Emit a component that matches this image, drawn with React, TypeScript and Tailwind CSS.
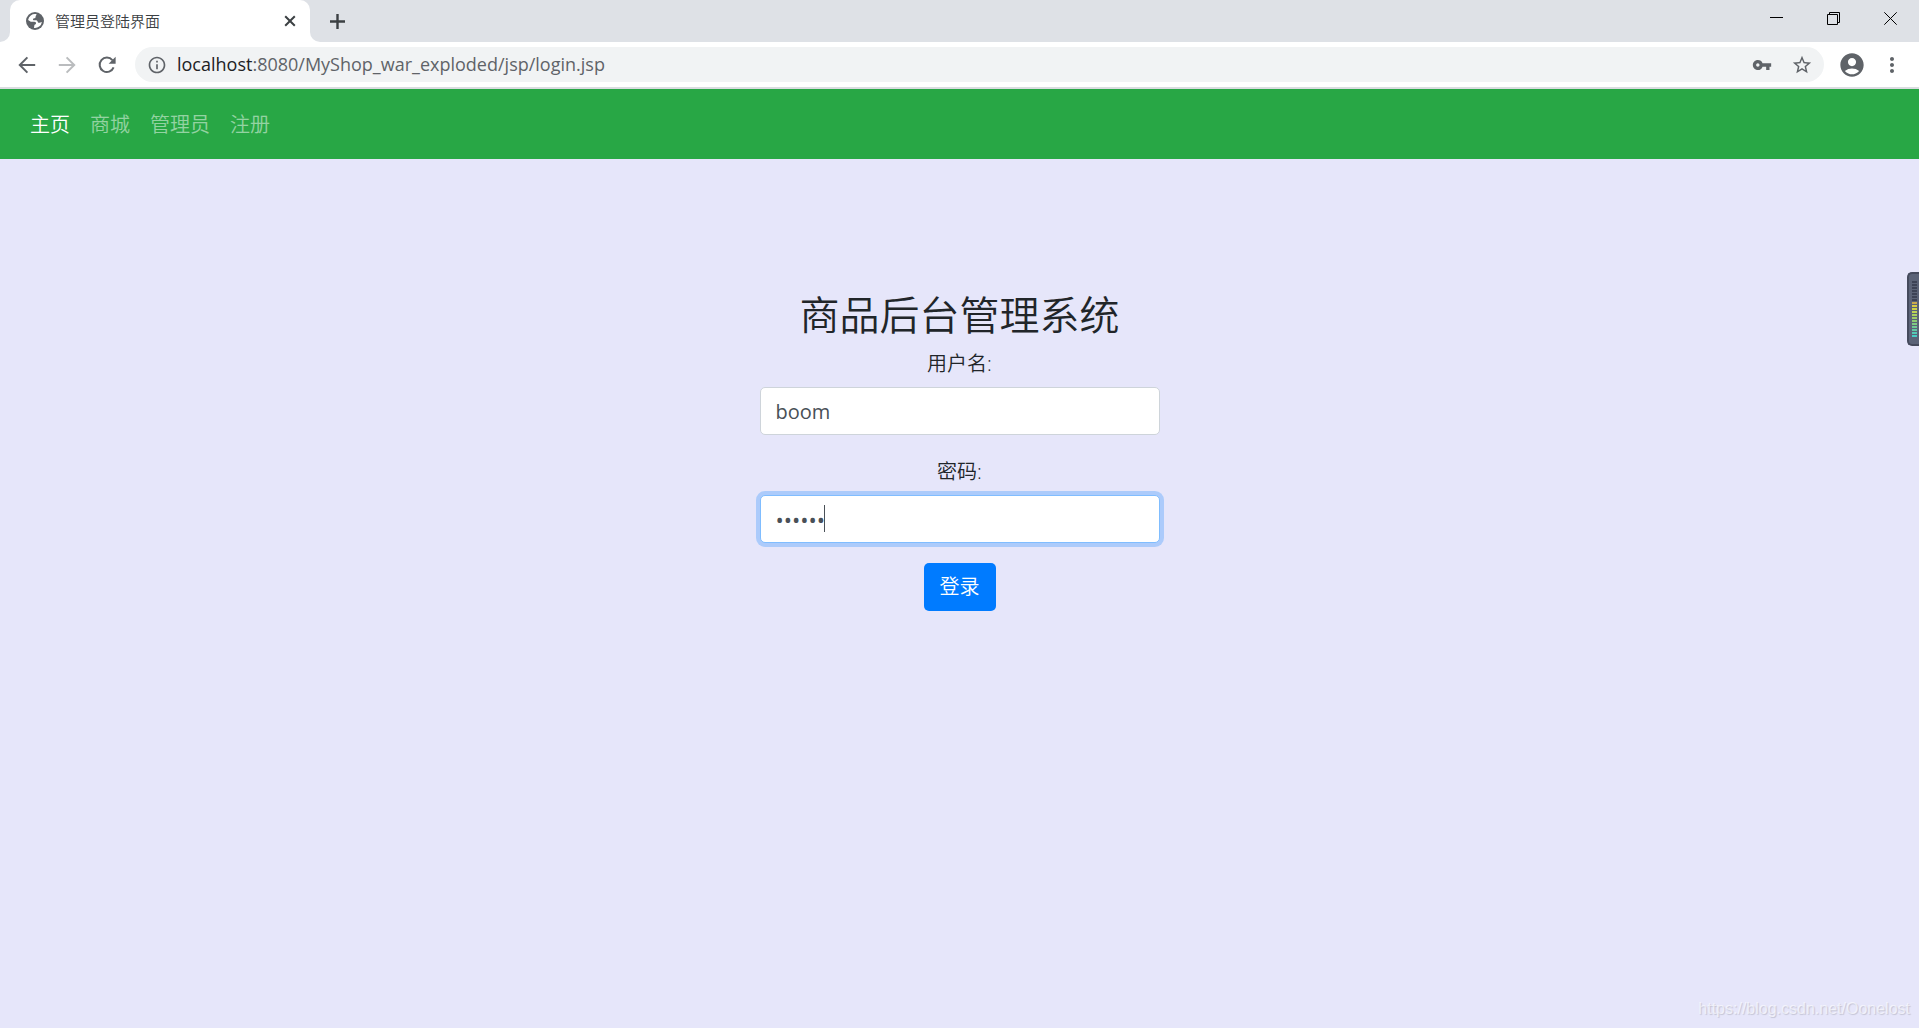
import { useState } from 'react';
import type { ReactNode } from 'react';
import { MdAccountCircle, MdMoreVert, MdOutlineInfo, MdStarBorder, MdVpnKey } from 'react-icons/md';

const navItems = [
  { label: '主页', active: true },
  { label: '商城', active: false },
  { label: '管理员', active: false },
  { label: '注册', active: false },
];

// Lit bars of the level meter, top to bottom
const meterBars = [
  '#3d4356', '#3d4356', '#3d4356', '#3d4356', '#3d4356', '#3d4356', '#3d4356',
  '#c9a94e', '#d8cb45', '#cdd24a', '#bdd354', '#a9d05f', '#9ccd68', '#8ccb74', '#7fcb83',
  '#6fc994', '#62c8a4', '#55c9b4', '#48cbc3',
];

function GlobeIcon() {
  return (
    <svg width="18" height="18" viewBox="0 0 18 18" className="shrink-0">
      <circle cx="9" cy="9" r="9" fill="#5f6368" />
      <path
        d="M9.800 2.100A7 7 0 0 0 2.100 8l2.700 1.700h3.400c1.700 0 2.200 1 1.700 2.100-.3.600-1.300.8-1.600 1.600l-.3 2.500a7 7 0 0 0 7.900-5.900l-2.300.8c-1.300.2-1.800-.4-2-1.300-.2-.9-1-1.300-2.100-1.300H7.600c-.8 0-.8-1.500 0-1.700 1.300-.3 2.100-.7 2-1.600-.1-.9.500-1.300 1-2.700Z"
        fill="#fff"
      />
    </svg>
  );
}

function TabStrip() {
  return (
    <div className="flex h-[42px] items-stretch bg-[#dee1e6]">
      <div className="w-[10px] bg-white">
        <div className="h-full rounded-br-[10px] bg-[#dee1e6]" />
      </div>
      <div className="flex w-[300px] items-center rounded-t-[10px] bg-white pr-3 pl-4">
        <GlobeIcon />
        <span className="ml-[11px] flex-1 text-[15px] text-[#3c4043]">管理员登陆界面</span>
        <button type="button" aria-label="关闭标签页" className="flex size-4 items-center justify-center">
          <svg width="12" height="12" viewBox="0 0 12 12" stroke="#3c4043" strokeWidth="2">
            <path d="M1.2 1.2l9.6 9.6M10.8 1.2l-9.6 9.6" />
          </svg>
        </button>
      </div>
      <div className="w-[10px] bg-white">
        <div className="h-full rounded-bl-[10px] bg-[#dee1e6]" />
      </div>
      <button type="button" aria-label="新标签页" className="flex w-[35px] items-center justify-center">
        <svg width="15" height="15" viewBox="0 0 15 15" stroke="#3c4043" strokeWidth="2.4">
          <path d="M7.5 0v15M0 7.5h15" />
        </svg>
      </button>
      <div className="ml-auto flex h-[37px]">
        <button type="button" aria-label="最小化" className="flex w-[57px] items-center justify-center">
          <svg width="13" height="13" viewBox="0 0 13 13">
            <path d="M0 5.5h13" stroke="#000" />
          </svg>
        </button>
        <button type="button" aria-label="还原" className="flex w-[57px] items-center justify-center">
          <svg width="13" height="13" viewBox="0 0 13 13" fill="none" stroke="#000">
            <path d="M.5 2.5h10v10H.5zM2.5 2.5v-2h10v10h-2" />
          </svg>
        </button>
        <button type="button" aria-label="关闭" className="flex w-[57px] items-center justify-center">
          <svg width="13" height="13" viewBox="0 0 13 13" stroke="#000">
            <path d="M.3.3l12.4 12.4M12.7.3.3 12.7" />
          </svg>
        </button>
      </div>
    </div>
  );
}

function ToolButton({ label, children }: { label: string; children: ReactNode }) {
  return (
    <button type="button" aria-label={label} className="flex size-8 shrink-0 items-center justify-center">
      {children}
    </button>
  );
}

function Toolbar() {
  return (
    <div className="flex h-[47px] items-center border-b-2 border-[#dadce0] bg-white px-[11px] text-[#5f6368]">
      <div className="flex gap-2">
        <ToolButton label="后退">
          <svg width="18" height="18" viewBox="0 0 18 18" fill="none" stroke="currentColor" strokeWidth="2">
            <path d="M17.2 9H2.2M9.4 1.4 1.8 9l7.6 7.6" />
          </svg>
        </ToolButton>
        <ToolButton label="前进">
          <svg width="18" height="18" viewBox="0 0 18 18" fill="none" stroke="#babcbe" strokeWidth="2">
            <path d="M.8 9h15M8.6 1.4 16.2 9l-7.6 7.6" />
          </svg>
        </ToolButton>
        <ToolButton label="刷新">
          <svg width="18" height="18" viewBox="0 0 18 18" fill="none" stroke="currentColor" strokeWidth="2">
            <path d="M15.6 11.4A7.2 7.2 0 1 1 14.4 4.2" />
            <path d="M17.600.8v7h-7z" fill="currentColor" stroke="none" />
          </svg>
        </ToolButton>
      </div>
      <div className="mx-3 flex h-[35px] flex-1 items-center rounded-full bg-[#f1f3f4] pr-[6px] pl-3">
        <MdOutlineInfo size={20} />
        <div className="ml-[10px] flex-1 font-['Open_Sans','Noto_Sans_CJK_SC',sans-serif] text-[18px] font-normal">
          <span className="text-[#202124]">localhost</span>:8080/MyShop_war_exploded/jsp/login.jsp
        </div>
        <div className="flex gap-2">
          <ToolButton label="密码">
            <MdVpnKey size={20} />
          </ToolButton>
          <ToolButton label="收藏">
            <MdStarBorder size={22} />
          </ToolButton>
        </div>
      </div>
      <div className="flex gap-2">
        <ToolButton label="用户">
          <MdAccountCircle size={28} />
        </ToolButton>
        <ToolButton label="菜单">
          <MdMoreVert size={24} />
        </ToolButton>
      </div>
    </div>
  );
}

function App() {
  const [username, setUsername] = useState('boom');
  const [password, setPassword] = useState('123456');

  return (
    <div className="relative flex min-h-screen flex-col overflow-hidden bg-[#e6e6fa] font-['Open_Sans','Noto_Sans_CJK_SC',sans-serif] font-[350] text-[#212529]">
      <TabStrip />
      <Toolbar />

      <nav className="flex h-[70px] items-center gap-5 bg-[#28a745] px-[30px] pt-[2px] text-xl">
        {navItems.map((item) => (
          <a key={item.label} href="#" className={item.active ? 'text-white' : 'text-white/50'}>
            {item.label}
          </a>
        ))}
      </nav>

      <main className="flex-1 pt-[130px]">
        <form className="mx-auto w-[400px] text-center text-xl" onSubmit={(e) => e.preventDefault()}>
          <h2 className="mb-[6px] text-[40px] leading-[52px]">商品后台管理系统</h2>
          <div className="mb-5">
            <label htmlFor="username" className="mb-[6px] block leading-[34px]">
              用户名:
            </label>
            <input
              id="username"
              type="text"
              value={username}
              onChange={(e) => setUsername(e.target.value)}
              className="block h-12 w-full rounded-[5px] border border-[#ced4da] bg-white px-[15px] font-normal text-[#495057]"
            />
          </div>
          <div className="mb-5">
            <label htmlFor="password" className="mb-[6px] block leading-[34px]">
              密码:
            </label>
            <div className="relative">
              <input
                id="password"
                type="password"
                value={password}
                onChange={(e) => setPassword(e.target.value)}
                className="block h-12 w-full rounded-[5px] border border-[#80bdff] bg-white px-[15px] text-[22px] font-normal text-[#495057] ring-4 ring-[#007bff]/25 outline-none"
              />
              <span className="absolute top-[10px] left-16 h-[27px] w-px bg-[#495057]" />
            </div>
          </div>
          <button type="submit" className="h-12 rounded-[5px] bg-[#007bff] px-4 text-white">
            登录
          </button>
        </form>
      </main>

      {/* Floating level meter docked to the window edge */}
      <div className="absolute top-[272px] right-0 flex h-[74px] w-3 flex-col gap-px rounded-l-[5px] border-2 border-r-0 border-[#454a5c] bg-[#5b6377] pt-[7px] pl-[3px]">
        {meterBars.map((color, i) => (
          <span key={i} className="h-[2px] w-[5px] shrink-0" style={{ backgroundColor: color }} />
        ))}
      </div>

      <div className="absolute right-[9px] bottom-[7px] font-['Liberation_Sans',sans-serif] text-base font-normal text-white/60 [text-shadow:1px_1px_1px_rgba(0,0,0,0.15)]">
        https://blog.csdn.net/Oonelost
      </div>
    </div>
  );
}

export default App;
